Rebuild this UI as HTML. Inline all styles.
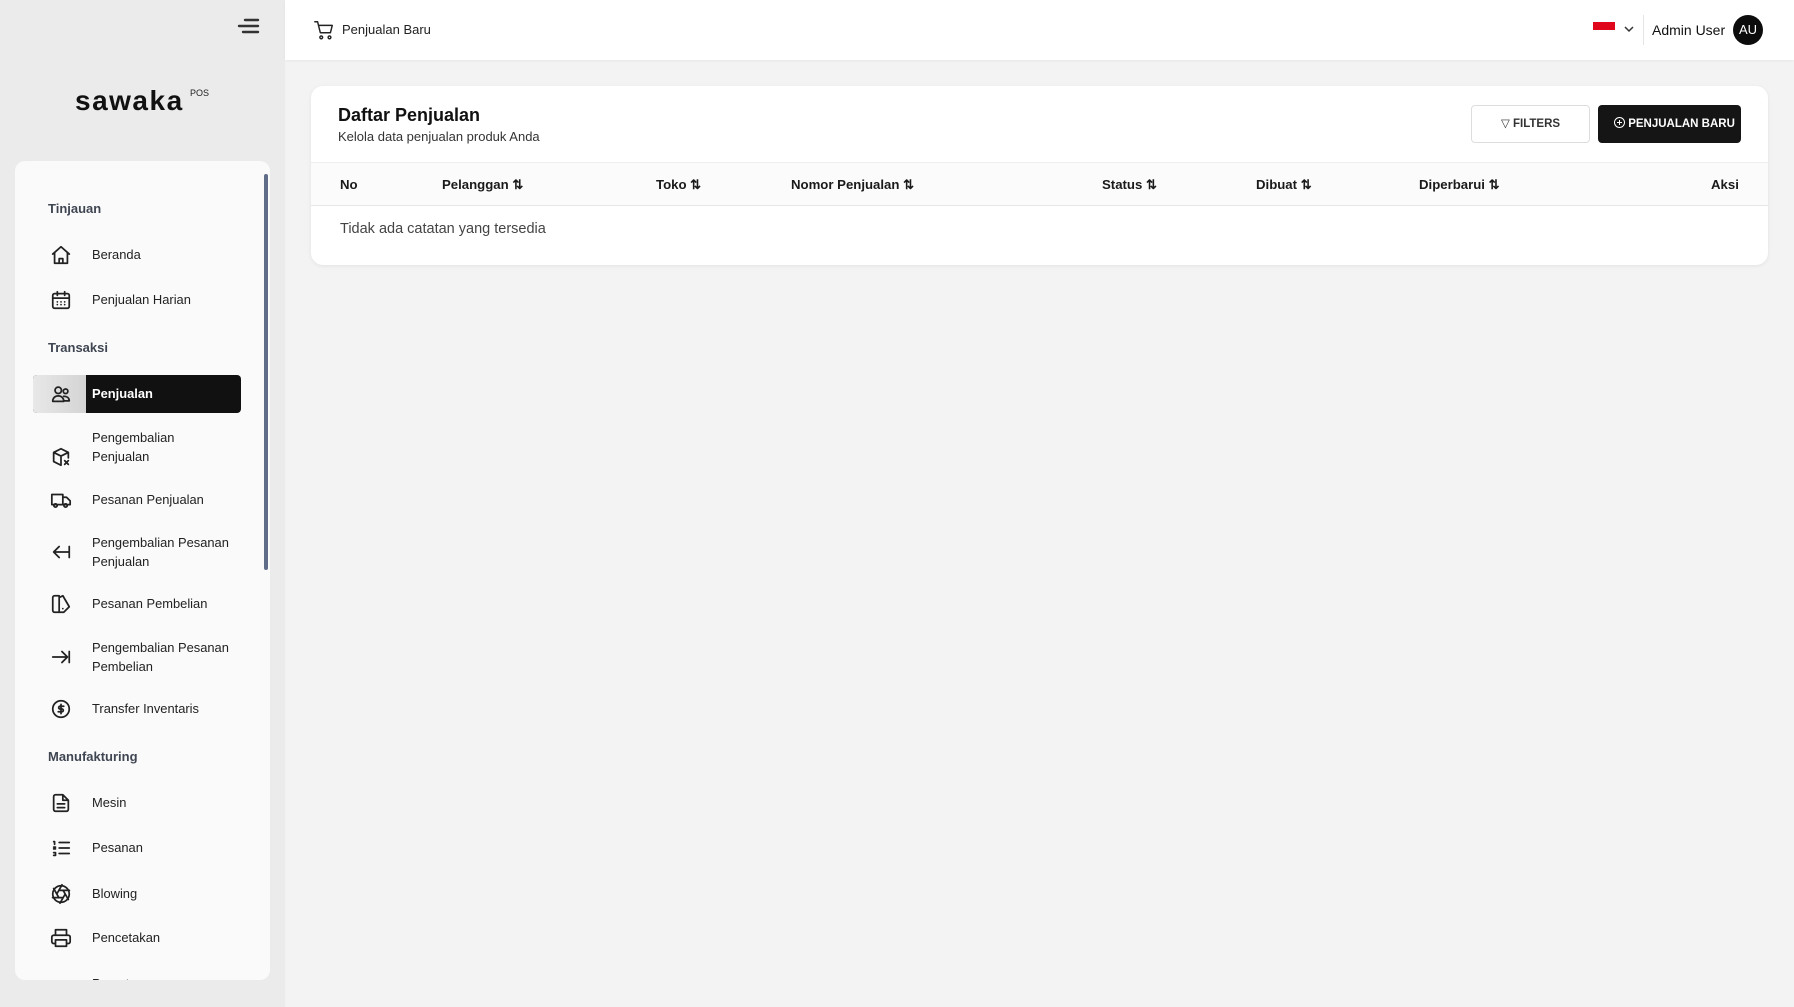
<!DOCTYPE html>
<html><head><meta charset="utf-8"><style>
*{margin:0;padding:0;box-sizing:border-box}
body{width:1794px;height:1007px;overflow:hidden;background:#f3f3f3;font-family:"Liberation Sans",sans-serif;color:#1a1a1a;position:relative}
.a{position:absolute;white-space:nowrap}
#side{position:absolute;left:0;top:0;width:285px;height:1007px;background:#ebebeb}
#hdr{position:absolute;left:285px;top:0;width:1509px;height:60px;background:#fff;box-shadow:0 1px 2px rgba(0,0,0,.05)}
#menu{position:absolute;left:15px;top:161px;width:255px;height:819px;background:#fafafa;border-radius:10px;overflow:hidden}
.sec{position:absolute;left:33px;font-size:13px;font-weight:bold;color:#3f4652}
.it{position:absolute;left:77px;font-size:12.9px;color:#222;line-height:19px}
.ic{position:absolute;left:35px;width:22px;height:22px}
.ic svg{width:22px;height:22px;fill:none;stroke:#222;stroke-width:1.9;stroke-linecap:round;stroke-linejoin:round}
#card{position:absolute;left:311px;top:86px;width:1457px;height:179px;background:#fff;border-radius:12px;box-shadow:0 1px 4px rgba(0,0,0,.07)}
.th{position:absolute;top:91px;font-size:13.2px;font-weight:bold;color:#1a1a1a}
</style></head><body>
<div id="side">
 <svg class="a" style="left:236px;top:17px" width="24" height="18" viewBox="0 0 24 18"><g stroke="#333" stroke-width="2.4" stroke-linecap="round"><line x1="9" y1="3" x2="22" y2="3"/><line x1="3" y1="9" x2="22" y2="9"/><line x1="7" y1="15" x2="22" y2="15"/></g></svg>
 <div class="a" style="left:75px;top:85px;font-size:28px;font-weight:bold;letter-spacing:1.5px;color:#111">sawaka</div>
 <div class="a" style="left:190px;top:88px;font-size:9px;color:#222">POS</div>
 <div id="menu">
  <div class="sec" style="top:40px">Tinjauan</div>
  <div class="ic" style="top:83px"><svg viewBox="0 0 24 24"><path d="M3 11l9-8 9 8M5 9.5V21h14V9.5M10 21v-5h4v5"/></svg></div>
  <div class="it" style="top:84px">Beranda</div>
  <div class="ic" style="top:128px"><svg viewBox="0 0 24 24"><rect x="3" y="5" width="18" height="16" rx="2"/><path d="M3 10h18M8 3v4M16 3v4M8 14h.01M12 14h.01M16 14h.01M8 17h.01M12 17h.01M16 17h.01"/></svg></div>
  <div class="it" style="top:129px">Penjualan Harian</div>
  <div class="sec" style="top:179px">Transaksi</div>
  <div class="a" style="left:18px;top:214px;width:208px;height:38px;border-radius:4px;background:#111;overflow:hidden"><div style="width:53px;height:38px;background:linear-gradient(90deg,#e8e8e8,#d4d4d4)"></div></div>
  <div class="ic" style="top:222px"><svg viewBox="0 0 24 24"><circle cx="9" cy="8" r="3.5"/><circle cx="17" cy="9" r="2.5"/><path d="M3 20c0-4 3-6 6-6s6 2 6 6zM15 14.5c3 0 6 1.5 6 5h-5"/></svg></div>
  <div class="it" style="top:223px;color:#fff;font-weight:bold">Penjualan</div>
  <div class="ic" style="top:285px"><svg viewBox="0 0 24 24"><path d="M12 3l8 4v6M12 3L4 7v10l8 4M4 7l8 4 8-4M12 11v10M16 16l4 4M20 16l-4 4"/></svg></div>
  <div class="it" style="top:267px">Pengembalian<br>Penjualan</div>
  <div class="ic" style="top:328px"><svg viewBox="0 0 24 24"><path d="M2 6h12v11H2zM14 9h4l4 4v4h-8"/><circle cx="6" cy="18" r="1.8"/><circle cx="17" cy="18" r="1.8"/></svg></div>
  <div class="it" style="top:329px">Pesanan Penjualan</div>
  <div class="ic" style="top:380px"><svg viewBox="0 0 24 24"><path d="M20 12H5M10 6l-6 6 6 6M21 6v12"/></svg></div>
  <div class="it" style="top:372px">Pengembalian Pesanan<br>Penjualan</div>
  <div class="ic" style="top:432px"><svg viewBox="0 0 24 24"><path d="M10 3H5a2 2 0 00-2 2v14a2 2 0 002 2h5zM10 5l4-2 7 12-6 6h-5M14 17h.01"/></svg></div>
  <div class="it" style="top:433px">Pesanan Pembelian</div>
  <div class="ic" style="top:485px"><svg viewBox="0 0 24 24"><path d="M3 12h15M13 6l6 6-6 6M21 6v12"/></svg></div>
  <div class="it" style="top:477px">Pengembalian Pesanan<br>Pembelian</div>
  <div class="ic" style="top:537px"><svg viewBox="0 0 24 24"><circle cx="12" cy="12" r="9"/><path d="M15 9h-4a1.5 1.5 0 000 3h2a1.5 1.5 0 010 3H9M12 7v10"/></svg></div>
  <div class="it" style="top:538px">Transfer Inventaris</div>
  <div class="sec" style="top:588px">Manufakturing</div>
  <div class="ic" style="top:631px"><svg viewBox="0 0 24 24"><path d="M14 3H6a2 2 0 00-2 2v14a2 2 0 002 2h12a2 2 0 002-2V9zM14 3v6h6M8 13h8M8 17h8"/></svg></div>
  <div class="it" style="top:632px">Mesin</div>
  <div class="ic" style="top:676px"><svg viewBox="0 0 24 24"><path d="M10 6h11M10 12h11M10 18h11M4 5h1v3M4 11h2l-2 2h2M4 17h2v3H4"/></svg></div>
  <div class="it" style="top:677px">Pesanan</div>
  <div class="ic" style="top:722px"><svg viewBox="0 0 24 24"><circle cx="12" cy="12" r="9"/><path d="M14.3 8l5.7 10M9.7 8h11.5M7.4 12l5.7-10M9.7 16L4 6M14.3 16H2.8M16.6 12l-5.7 10"/></svg></div>
  <div class="it" style="top:723px">Blowing</div>
  <div class="ic" style="top:766px"><svg viewBox="0 0 24 24"><path d="M6 9V3h12v6M6 18H4a2 2 0 01-2-2v-5a2 2 0 012-2h16a2 2 0 012 2v5a2 2 0 01-2 2h-2M6 14h12v7H6z"/></svg></div>
  <div class="it" style="top:767px">Pencetakan</div>
  <div class="it" style="top:813px">Pemotongan</div>
  <div class="a" style="left:249px;top:13px;width:4px;height:396px;background:#5f6d88;border-radius:2px"></div>
 </div>
</div>
<div id="hdr">
 <svg class="a" style="left:28px;top:19px" width="22" height="22" viewBox="0 0 24 24" fill="none" stroke="#222" stroke-width="1.6" stroke-linecap="round" stroke-linejoin="round"><path d="M2 3h3l3 12h11l2-8H6"/><circle cx="9" cy="20" r="1.5"/><circle cx="18" cy="20" r="1.5"/></svg>
 <div class="a" style="left:57px;top:22px;font-size:13px;color:#222">Penjualan Baru</div>
 <div class="a" style="left:1308px;top:22px;width:22px;height:8px;background:#e0061b"></div>
 <svg class="a" style="left:1339px;top:26px" width="10" height="7" viewBox="0 0 10 7"><path d="M1 1l4 4 4-4" fill="none" stroke="#333" stroke-width="1.5"/></svg>
 <div class="a" style="left:1358px;top:15px;width:1px;height:30px;background:#e5e5e5"></div>
 <div class="a" style="left:1367px;top:22px;font-size:14px;color:#111">Admin User</div>
 <div class="a" style="left:1448px;top:15px;width:30px;height:30px;border-radius:50%;background:#0c0c0c;color:#fff;font-size:13px;text-align:center;line-height:30px">AU</div>
</div>
<div id="card">
 <div class="a" style="left:27px;top:19px;font-size:18px;font-weight:bold;color:#111">Daftar Penjualan</div>
 <div class="a" style="left:27px;top:43px;font-size:13px;color:#333">Kelola data penjualan produk Anda</div>
 <div class="a" style="left:1160px;top:19px;width:119px;height:38px;border:1px solid #ddd;border-radius:4px;font-size:11.5px;font-weight:bold;color:#333;text-align:center;line-height:36px"><span style="font-weight:normal">▽</span> FILTERS</div>
 <div class="a" style="left:1287px;top:19px;width:143px;height:38px;background:#151515;border-radius:4px;font-size:11.5px;font-weight:bold;color:#fff;line-height:38px;padding-left:16px"><span style="display:inline-block;width:11px;height:11px;border:1.3px solid #fff;border-radius:50%;vertical-align:-1px;position:relative"><span style="position:absolute;left:2px;top:3.5px;width:5px;height:1.3px;background:#fff"></span><span style="position:absolute;left:3.8px;top:1.7px;width:1.3px;height:5px;background:#fff"></span></span> PENJUALAN BARU</div>
 <div class="a" style="left:0;top:76px;width:1457px;height:44px;background:#fbfbfb;border-top:1px solid #eee;border-bottom:1px solid #e6e6e6"></div>
 <div class="th" style="left:29px">No</div>
 <div class="th" style="left:131px">Pelanggan ⇅</div>
 <div class="th" style="left:345px">Toko ⇅</div>
 <div class="th" style="left:480px">Nomor Penjualan ⇅</div>
 <div class="th" style="left:791px">Status ⇅</div>
 <div class="th" style="left:945px">Dibuat ⇅</div>
 <div class="th" style="left:1108px">Diperbarui ⇅</div>
 <div class="th" style="left:1400px">Aksi</div>
 <div class="a" style="left:29px;top:135px;font-size:14.5px;color:#444">Tidak ada catatan yang tersedia</div>
</div>
</body></html>
